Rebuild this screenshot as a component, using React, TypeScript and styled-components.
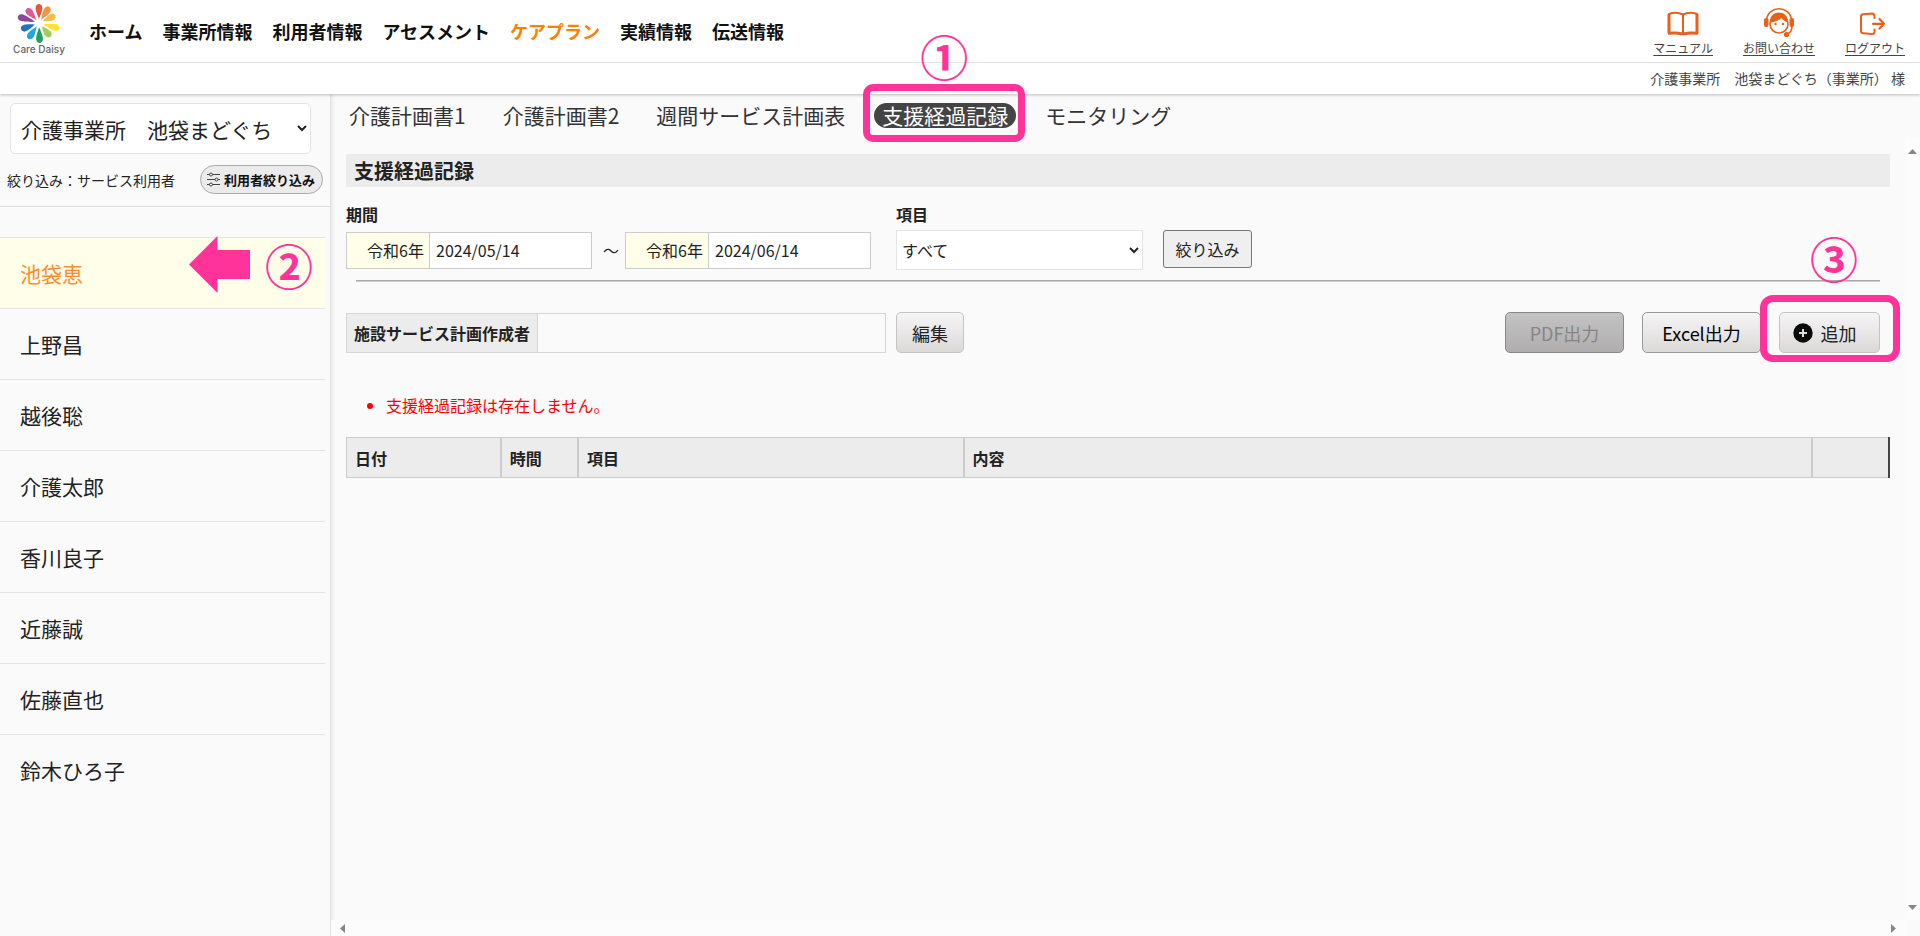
import React from "react";
import styled, { createGlobalStyle, css } from "styled-components";

const PINK = "#ff3399";
const ORANGE = "#e8611c";

const GlobalStyle = createGlobalStyle`
  *, *::before, *::after { box-sizing: border-box; }
  html, body, #root { height: 100%; }
  body {
    margin: 0;
    background: #fafafa;
    color: #222;
    overflow: hidden;
  }
  body, button, input, select {
    font-family: "Noto Sans CJK JP", "Noto Sans", sans-serif;
  }
`;

const Page = styled.div`
  display: flex;
  flex-direction: column;
  height: 100%;
`;

/* ---------- header ---------- */

const Header = styled.header`
  position: relative;
  z-index: 1;
  background: #fff;
  box-shadow: 0 1px 3px rgba(0, 0, 0, 0.25);
`;

const TopBar = styled.div`
  display: flex;
  align-items: center;
  height: 63px;
  padding: 0 15px;
  border-bottom: 1px solid #e4e4e4;
`;

const Logo = styled.a`
  display: flex;
  flex-direction: column;
  align-items: center;
  width: 48px;
  margin: 0 26px 4px 0;
  color: #666;
  font: 500 10px/12px "Inter", sans-serif;
  text-decoration: none;
  white-space: nowrap;

  svg { display: block; }
`;

const GlobalNav = styled.nav`
  display: flex;
  gap: 20px;
  flex: 1;
`;

const NavLink = styled.a<{ $active?: boolean }>`
  color: ${(p) => (p.$active ? "#ff8000" : "#111")};
  font-size: 18px;
  font-weight: 700;
  line-height: 26px;
  text-decoration: none;
  white-space: nowrap;
`;

const Utilities = styled.div`
  display: flex;
  gap: 30px;
  padding-top: 2px;
`;

const UtilityLink = styled.a`
  display: flex;
  flex-direction: column;
  align-items: center;
  color: #444;
  font-size: 12px;
  line-height: 20px;
  text-underline-offset: 2px;

  svg { display: block; }
`;

const UserBar = styled.div`
  height: 31px;
  padding: 0 15px;
  color: #444;
  font-size: 14px;
  line-height: 31px;
  text-align: right;
`;

/* ---------- sidebar ---------- */

const Body = styled.div`
  display: flex;
  flex: 1;
  min-height: 0;
`;

const Sidebar = styled.aside`
  flex: 0 0 331px;
  border-right: 1px solid #e2e2e2;
  box-shadow: 1px 0 4px rgba(0, 0, 0, 0.1);
`;

const OfficeArea = styled.div`
  padding: 9px 19px 10px 10px;
`;

const OfficeSelect = styled.select`
  display: block;
  width: 100%;
  height: 51px;
  padding: 0 6px;
  border: 1px solid #e4e4e4;
  border-radius: 5px;
  background: #fff;
  color: #222;
  font-size: 21px;
`;

const FilterRow = styled.div`
  display: flex;
  justify-content: space-between;
  align-items: flex-start;
  height: 43px;
  padding: 1px 7px 0;
  border-bottom: 1px solid #dedede;
  font-size: 14px;
  line-height: 30px;
`;

const FilterButton = styled.button`
  display: flex;
  align-items: center;
  gap: 4px;
  height: 29px;
  padding: 0 7px 0 6px;
  border: 1px solid #aaa;
  border-radius: 15px;
  background: #ebebeb;
  color: #111;
  font-size: 13px;
  font-weight: 700;
`;

const UserList = styled.ul`
  margin: 30px 5px 0 0;
  padding: 0;
  list-style: none;
`;

const UserItem = styled.li<{ $active?: boolean }>`
  position: relative;
  border-top: 1px solid #e4e4e4;
  background: ${(p) => (p.$active ? "#ffffe9" : "transparent")};

  a {
    display: block;
    padding: 20px;
    color: ${(p) => (p.$active ? "#ff8c2e" : "#222")};
    font-size: 21px;
    line-height: 30px;
    text-decoration: none;
  }
`;

/* ---------- main ---------- */

const Main = styled.main`
  display: flex;
  flex-direction: column;
  flex: 1;
  min-width: 0;
`;

const Tabs = styled.nav`
  display: flex;
  gap: 21px;
  padding: 9px 10px 11px;
`;

const TabSlot = styled.div`
  position: relative;
`;

const Tab = styled.a<{ $active?: boolean }>`
  display: block;
  padding: 0 8px;
  border-radius: 13px;
  background: ${(p) => (p.$active ? "#444" : "transparent")};
  color: ${(p) => (p.$active ? "#fff" : "#333")};
  font-size: 21px;
  line-height: 25px;
  text-decoration: none;
  white-space: nowrap;
`;

const ScrollArea = styled.div`
  display: grid;
  grid-template: 1fr 16px / 1fr 15px;
  flex: 1;
  min-height: 0;
`;

const VerticalBar = styled.div`
  display: flex;
  flex-direction: column;
  justify-content: space-between;
  align-items: center;
  padding: 10px 0;
  background: #fcfcfc;
`;

const HorizontalBar = styled.div`
  display: flex;
  justify-content: space-between;
  align-items: center;
  padding: 0 9px;
  background: #fcfcfc;
`;

const Content = styled.div`
  min-width: 0;
  padding: 15px 15px 0;
`;

const PageTitle = styled.h1`
  margin: 0 0 14px;
  padding: 0 8px;
  background: #ececec;
  color: #222;
  font-size: 20px;
  line-height: 33px;
`;

const Filters = styled.form`
  display: flex;
  align-items: flex-end;
`;

const Field = styled.div`
  display: flex;
  flex-direction: column;
  margin-right: 20px;
`;

const FieldLabel = styled.label`
  margin-bottom: 2px;
  font-size: 16px;
  font-weight: 700;
  line-height: 27px;
`;

const Range = styled.div`
  display: flex;
  align-items: center;
  height: 40px;
  margin-right: 5px;
  font-size: 16px;
`;

const RangeMark = styled.span`
  width: 33px;
  padding-left: 5px;
  text-align: center;
`;

const DateBox = styled.div`
  display: flex;
  width: 246px;
  height: 37px;
  border: 1px solid #ccc;
  background: #fff;
`;

const Era = styled.span`
  width: 83px;
  padding-right: 5px;
  border-right: 1px solid #ccc;
  background: #ffffe9;
  line-height: 35px;
  text-align: right;
`;

const DateInput = styled.input`
  flex: 1;
  min-width: 0;
  padding: 0 6px;
  border: 0;
  background: transparent;
  color: #222;
  font-size: 16px;
`;

const ItemSelect = styled.select`
  width: 247px;
  height: 40px;
  padding: 0 1px;
  border: 1px solid #e4e4e4;
  border-radius: 0;
  background: #fff;
  color: #222;
  font-size: 16px;
`;

const NarrowButton = styled.button`
  width: 89px;
  height: 38px;
  margin-bottom: 2px;
  padding: 0;
  border: 1px solid #777;
  border-radius: 3px;
  background: #efefef;
  color: #222;
  font-size: 16px;
`;

const Divider = styled.hr`
  height: 2px;
  margin: 10px 10px 30px;
  border: 0;
  border-top: 1px solid #aaa;
  background: #ccc;
`;

const ActionRow = styled.div`
  display: flex;
  align-items: center;
  gap: 10px;
  padding-right: 10px;
`;

const AuthorBox = styled.div`
  display: flex;
  width: 540px;
  height: 40px;
  border: 1px solid #d6d6d6;
`;

const AuthorLabel = styled.div`
  padding: 0 7px;
  border-right: 1px solid #d6d6d6;
  background: #ececec;
  font-size: 16px;
  font-weight: 700;
  line-height: 38px;
`;

const ActionButton = styled.button<{ $width: number; $strong?: boolean; $icon?: boolean }>`
  display: flex;
  justify-content: center;
  align-items: center;
  gap: 8px;
  width: ${(p) => p.$width}px;
  height: 41px;
  padding: ${(p) => (p.$icon ? "0 10px 0 0" : "0")};
  border: 1px solid ${(p) => (p.$strong ? "#999" : "#c4c4c4")};
  border-radius: 5px;
  background: linear-gradient(#f6f5f5, #dbd8d8);
  color: ${(p) => (p.$strong ? "#000" : "#222")};
  font-size: 18px;

  &:disabled {
    border-color: #888;
    background: linear-gradient(#c4c3c3, #afadad);
    color: #858585;
  }
`;

const OutputButtons = styled.div`
  display: flex;
  gap: 18px;
  margin-left: auto;
`;

const Messages = styled.ul`
  margin: 39px 0 19px;
  padding-left: 40px;
  color: #f00;
  font-size: 16px;
  line-height: 26px;
`;

const RecordTable = styled.table`
  width: 100%;
  table-layout: fixed;
  border-collapse: collapse;
  border-right: 2px solid #444;
`;

const HeadCell = styled.th<{ $width?: string }>`
  width: ${(p) => p.$width ?? "auto"};
  height: 40px;
  padding: 0 8px;
  border: 1px solid #ccc;
  border-right-width: 2px;
  background: #ececec;
  font-size: 16px;
  line-height: 24px;
  text-align: left;

  &:last-child { border-right: 2px solid #444; }
`;

/* ---------- step annotations ---------- */

const overlay = css`
  position: absolute;
  z-index: 2;
  pointer-events: none;
`;

const TabFrame = styled.div`
  ${overlay}
  inset: -19px -9px -14px -11px;
  border: 7px solid ${PINK};
  border-radius: 10px;
`;

const AddSlot = styled.div`
  position: relative;
`;

const AddFrame = styled.div`
  ${overlay}
  inset: -17px -20px -9px -19px;
  border: 7px solid ${PINK};
  border-radius: 13px;
`;

const StepNumber = styled.span<{ $left: number; $top: number }>`
  ${overlay}
  left: ${(p) => p.$left}px;
  top: ${(p) => p.$top}px;
  width: 50px;
  color: ${PINK};
  font-size: 48px;
  font-weight: 700;
  line-height: 50px;
  text-align: center;
`;

const Pointer = styled.svg`
  position: absolute;
  left: 189px;
  top: -2px;
`;

/* ---------- drawings ---------- */

const petals: [number, string, number][] = [
  [0, "#e2563a", 19],
  [33, "#ef9440", 19],
  [65, "#f5bd45", 18],
  [105, "#f8e62e", 21],
  [140, "#a3cd57", 18],
  [178, "#1fa25c", 20],
  [214, "#22a7e0", 19],
  [250, "#2173bb", 19],
  [287, "#8f4699", 22],
  [319, "#e2559a", 19],
];

const DaisyMark = () => (
  <svg width="44" height="40" viewBox="-22 -20 44 40" aria-hidden="true">
    {petals.map(([angle, color, r]) => (
      <path
        key={angle}
        d={`M0 -4 C-1 -7 -4 -${r - 6} -3.300 -${r - 3} C-2.500 -${r + 1} 2.500 -${r + 1} 3.300 -${r - 3} C4 -${r - 6} 1 -7 0 -4Z`}
        fill={color}
        transform={`rotate(${angle})`}
      />
    ))}
  </svg>
);

const BookIcon = () => (
  <svg width="32" height="32" viewBox="0 0 32 32" fill="none" stroke={ORANGE} aria-hidden="true">
    <path d="M16 8.500C12 6.600 6 6.600 2 8V28M16 8.500C20 6.600 26 6.600 30 8V28" strokeWidth="2" />
    <path d="M2 8V27.500M30 8V27.500" strokeWidth="3" />
    <path d="M1 27.300C6 26.800 12 26.800 14 27.800H18C20 26.800 26 26.800 31 27.300" strokeWidth="3" />
    <path d="M16 8.500V27" strokeWidth="2" />
  </svg>
);

const SupportIcon = () => (
  <svg width="32" height="32" viewBox="0 0 32 32" aria-hidden="true">
    <circle cx="16" cy="18" r="9" fill="#fff" stroke={ORANGE} strokeWidth="1.600" />
    <path d="M7 16.500C6 3 26 3 25 16.500C22 16 20 14 18.500 12C16 14.500 11 16.500 7 16.500Z" fill={ORANGE} />
    <path d="M3.500 14C5 -1 27 -1 28.500 14" fill="none" stroke={ORANGE} strokeWidth="1.600" />
    <rect x="1" y="12" width="4.500" height="9" rx="2" fill={ORANGE} />
    <rect x="26.500" y="12" width="4.500" height="9" rx="2" fill={ORANGE} />
    <path d="M29 20C29 24 27 27 24 28" fill="none" stroke={ORANGE} strokeWidth="1.600" />
    <circle cx="23.500" cy="28.500" r="2.600" fill={ORANGE} />
    <circle cx="12.500" cy="18" r="1.200" fill={ORANGE} />
    <circle cx="20" cy="18" r="1.200" fill={ORANGE} />
  </svg>
);

const LogoutIcon = () => (
  <svg
    width="32"
    height="32"
    viewBox="0 0 32 32"
    fill="none"
    stroke={ORANGE}
    strokeWidth="2"
    strokeLinecap="round"
    strokeLinejoin="round"
    aria-hidden="true"
  >
    <path d="M15.500 12V10Q15.500 7.500 13 7.500L4 8.200Q2 8.500 2 10.500V25Q2 27 4 27.200L13 28Q15.500 28 15.500 25.500V23.500" />
    <path d="M14 17.800H25M20.500 13L25 17.800L20.500 22.500" strokeWidth="2.200" />
  </svg>
);

const SlidersIcon = () => (
  <svg width="13" height="15" viewBox="0 0 13 15" fill="#ebebeb" stroke="#444" aria-hidden="true">
    <path d="M0 2.500H13M0 7.500H13M0 12.500H13" />
    <circle cx="4" cy="2.500" r="1.500" />
    <circle cx="9.500" cy="7.500" r="1.500" />
    <circle cx="4" cy="12.500" r="1.500" />
  </svg>
);

const PlusIcon = () => (
  <svg width="20" height="20" viewBox="0 0 20 20" aria-hidden="true">
    <circle cx="10" cy="10" r="9.700" fill="#0a0a0a" />
    <path d="M10 6V14M6 10H14" stroke="#ddd" strokeWidth="2" />
  </svg>
);

const arrows = {
  up: "M0 5H9L4.500 0Z",
  down: "M0 0H9L4.500 5Z",
  left: "M5 0V9L0 4.500Z",
  right: "M0 0V9L5 4.500Z",
};

const BarArrow = ({ to }: { to: keyof typeof arrows }) => {
  const flat = to === "up" || to === "down";
  return (
    <svg width={flat ? 9 : 5} height={flat ? 5 : 9} fill="#868686" aria-hidden="true">
      <path d={arrows[to]} />
    </svg>
  );
};

/* ---------- data ---------- */

const menu = ["ホーム", "事業所情報", "利用者情報", "アセスメント", "ケアプラン", "実績情報", "伝送情報"];
const tabs = ["介護計画書1", "介護計画書2", "週間サービス計画表", "支援経過記録", "モニタリング"];
const users = ["池袋恵", "上野昌", "越後聡", "介護太郎", "香川良子", "近藤誠", "佐藤直也", "鈴木ひろ子"];

export default function App() {
  return (
    <Page>
      <GlobalStyle />
      <Header>
        <TopBar>
          <Logo href="#">
            <DaisyMark />
            Care Daisy
          </Logo>
          <GlobalNav>
            {menu.map((name) => (
              <NavLink key={name} href="#" $active={name === "ケアプラン"}>
                {name}
              </NavLink>
            ))}
          </GlobalNav>
          <Utilities>
            <UtilityLink href="#">
              <BookIcon />
              マニュアル
            </UtilityLink>
            <UtilityLink href="#">
              <SupportIcon />
              お問い合わせ
            </UtilityLink>
            <UtilityLink href="#">
              <LogoutIcon />
              ログアウト
            </UtilityLink>
          </Utilities>
        </TopBar>
        <UserBar>介護事業所　池袋まどぐち（事業所） 様</UserBar>
      </Header>

      <Body>
        <Sidebar>
          <OfficeArea>
            <OfficeSelect aria-label="事業所">
              <option>介護事業所　池袋まどぐち</option>
            </OfficeSelect>
          </OfficeArea>
          <FilterRow>
            絞り込み：サービス利用者
            <FilterButton type="button">
              <SlidersIcon />
              利用者絞り込み
            </FilterButton>
          </FilterRow>
          <UserList>
            {users.map((name, i) => (
              <UserItem key={name} $active={i === 0}>
                <a href="#">{name}</a>
                {i === 0 && (
                  <>
                    <Pointer width="61" height="57" fill={PINK} aria-hidden="true">
                      <path d="M0 28.500L28.500 0V14H61V43H28.500V57Z" />
                    </Pointer>
                    <StepNumber $left={264} $top={1}>②</StepNumber>
                  </>
                )}
              </UserItem>
            ))}
          </UserList>
        </Sidebar>

        <Main>
          <Tabs>
            {tabs.map((name) => {
              const active = name === "支援経過記録";
              return (
                <TabSlot key={name}>
                  <Tab href="#" $active={active}>{name}</Tab>
                  {active && (
                    <>
                      <TabFrame />
                      <StepNumber $left={45} $top={-73}>①</StepNumber>
                    </>
                  )}
                </TabSlot>
              );
            })}
          </Tabs>

          <ScrollArea>
            <Content>
              <PageTitle>支援経過記録</PageTitle>
              <Filters>
                <Field>
                  <FieldLabel htmlFor="from">期間</FieldLabel>
                  <Range>
                    <DateBox>
                      <Era>令和6年</Era>
                      <DateInput id="from" defaultValue="2024/05/14" />
                    </DateBox>
                    <RangeMark>～</RangeMark>
                    <DateBox>
                      <Era>令和6年</Era>
                      <DateInput aria-label="期間の終わり" defaultValue="2024/06/14" />
                    </DateBox>
                  </Range>
                </Field>
                <Field>
                  <FieldLabel htmlFor="item">項目</FieldLabel>
                  <ItemSelect id="item">
                    <option>すべて</option>
                  </ItemSelect>
                </Field>
                <NarrowButton type="button">絞り込み</NarrowButton>
              </Filters>
              <Divider />

              <ActionRow>
                <AuthorBox>
                  <AuthorLabel>施設サービス計画作成者</AuthorLabel>
                </AuthorBox>
                <ActionButton type="button" $width={68}>編集</ActionButton>
                <OutputButtons>
                  <ActionButton type="button" $width={119} disabled>PDF出力</ActionButton>
                  <ActionButton type="button" $width={119} $strong>Excel出力</ActionButton>
                  <AddSlot>
                    <ActionButton type="button" $width={101} $icon>
                      <PlusIcon />
                      追加
                    </ActionButton>
                    <AddFrame />
                    <StepNumber $left={30} $top={-80}>③</StepNumber>
                  </AddSlot>
                </OutputButtons>
              </ActionRow>

              <Messages>
                <li>支援経過記録は存在しません。</li>
              </Messages>

              <RecordTable>
                <thead>
                  <tr>
                    <HeadCell $width="10%">日付</HeadCell>
                    <HeadCell $width="5%">時間</HeadCell>
                    <HeadCell $width="25%">項目</HeadCell>
                    <HeadCell>内容</HeadCell>
                    <HeadCell $width="5%" aria-label="操作" />
                  </tr>
                </thead>
              </RecordTable>
            </Content>
            <VerticalBar>
              <BarArrow to="up" />
              <BarArrow to="down" />
            </VerticalBar>
            <HorizontalBar>
              <BarArrow to="left" />
              <BarArrow to="right" />
            </HorizontalBar>
          </ScrollArea>
        </Main>
      </Body>
    </Page>
  );
}
